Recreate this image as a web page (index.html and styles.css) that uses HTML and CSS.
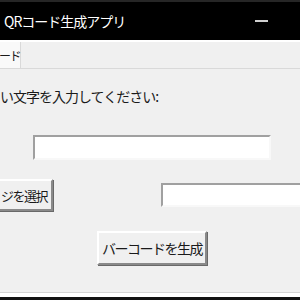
FILE: index.html
```html
<!DOCTYPE html>
<html>

<head>
    <meta charset="UTF-8">
    <title>QRコード生成アプリ</title>
    <link rel="stylesheet" href="styles.css">
</head>

<body>
    <div class="window">
        <div class="titlebar">
            <span class="title">QRコード生成アプリ</span>
            <span class="minimize"></span>
        </div>
        <div class="tabs">
            <div class="tab">ード</div>
        </div>

        <div class="content">
            <p class="prompt">い文字を入力してください:</p>
            <input type="text" class="entry entry-text">

            <div class="row">
                <button type="button" class="btn btn-pick">ジを選択</button>
                <input type="text" class="entry entry-file">
            </div>

            <button type="button" class="btn btn-make">バーコードを生成</button>
        </div>

        <div class="frame-bottom"></div>
    </div>
</body>

</html>
```

FILE: styles.css
```css
body {
    margin: 0;
    padding: 0;
    width: 300px;
    height: 300px;
    overflow: hidden;
    background-color: #f0f0f0;
    font-family: "Noto Sans CJK JP", sans-serif;
    color: #1a1a1a;
}

.window {
    display: flex;
    flex-direction: column;
    height: 300px;
}

.titlebar {
    display: flex;
    align-items: center;
    height: 38px;
    padding-left: 4px;
    background-color: #000;
    border-top: 2px solid #262626;
}

.title {
    color: #fff;
    font-size: 14px;
    letter-spacing: -1px;
}

.minimize {
    width: 13px;
    height: 2px;
    margin-left: auto;
    margin-right: 32px;
    background-color: #d0d0d0;
}

.tabs {
    height: 26px;
    border-top: 2px solid #fff;
    border-bottom: 1px solid #d9d9d9;
}

.tab {
    display: flex;
    justify-content: flex-end;
    align-items: center;
    box-sizing: border-box;
    width: 21px;
    height: 26px;
    background-color: #f9f9f9;
    border-right: 1px solid #d9d9d9;
    font-size: 12px;
    letter-spacing: -1.5px;
    white-space: nowrap;
}

.content {
    flex: 1;
}

.prompt {
    margin: 17px 0 0 0;
    font-size: 14px;
    line-height: 20px;
    letter-spacing: -1px;
}

.entry {
    display: block;
    flex-shrink: 0;
    box-sizing: border-box;
    margin: 0;
    padding: 0;
    background-color: #fff;
    border: 2px solid;
    border-color: #a0a0a0 #f8f8f8 #f8f8f8 #a0a0a0;
    outline: none;
}

.entry-text {
    width: 238px;
    height: 25px;
    margin: 29px 0 0 33px;
}

.row {
    display: flex;
    align-items: flex-start;
    margin-top: 19px;
}

.btn {
    flex-shrink: 0;
    box-sizing: border-box;
    padding: 0;
    background-color: #f0f0f0;
    border: 2px solid;
    border-color: #fff #8a8a8a #8a8a8a #fff;
    box-shadow: 1px 1px 0 #696969;
    font-family: "Noto Sans CJK JP", sans-serif;
    font-size: 14px;
    letter-spacing: -1.5px;
    color: #1a1a1a;
}

.btn-pick {
    width: 63px;
    height: 32px;
    margin-left: -10px;
    padding-right: 4px;
    font-size: 13px;
    text-align: right;
    white-space: nowrap;
}

.entry-file {
    width: 139px;
    height: 24px;
    margin: 4px 0 0 108px;
    border-right: none;
}

.btn-make {
    display: block;
    width: 110px;
    height: 34px;
    margin: 20px 0 0 97px;
}

.frame-bottom {
    height: 4px;
    border-top: 1px solid #d4d4d4;
    border-bottom: 3px solid #111;
    background-color: #fff;
}
```
